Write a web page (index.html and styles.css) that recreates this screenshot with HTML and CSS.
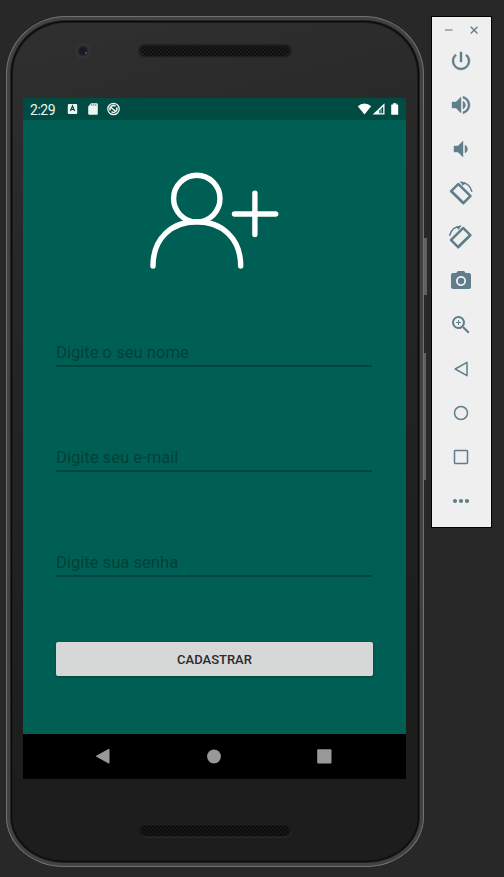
FILE: index.html
```html
<!DOCTYPE html>
<html lang="pt-BR">
<head>
<meta charset="utf-8">
<title>Cadastro</title>
<link rel="stylesheet" href="styles.css">
</head>
<body>
<main class="stage">
  <section class="phone">
    <span class="side-key power-key"></span>
    <span class="side-key volume-key"></span>
    <header class="bezel bezel-top">
      <span class="camera"></span>
      <svg class="speaker" width="154" height="14" viewBox="0 0 154 14">
        <defs><pattern id="holes" x="2" y="1" width="4" height="4" patternUnits="userSpaceOnUse"><circle cx="1" cy="1" r=".9" fill="#050505"/><circle cx="3" cy="3" r=".9" fill="#050505"/></pattern></defs>
        <rect x=".5" y=".5" width="153" height="12.500" rx="6.2" fill="#1c1c1c" stroke="#222"/>
        <rect x="3" y="2" width="148" height="10" rx="5" fill="url(#holes)"/>
      </svg>
    </header>
    <div class="screen">
      <div class="status">
        <span class="clock">2:29</span>
        <svg class="notices" width="54" height="14" viewBox="0 0 54 14">
          <rect x=".8" y="2" width="9.4" height="10" rx="1" fill="#eef5f3"/>
          <path d="M3.4 9 5.5 3.8 7.6 9M4.2 7.4h2.6" fill="none" stroke="#004c43" stroke-width="1.2"/>
          <path d="M24.2 1.2h5.6q1 0 1 1v9.600q0 1-1 1h-7.600q-1 0-1-1v-7.400z" fill="#eef5f3"/>
          <path d="M24.800 2v2M26.800 2v2M28.800 2v2" stroke="#6f9993" stroke-width="1"/>
          <circle cx="46.500" cy="7" r="5.700" fill="none" stroke="#eef5f3" stroke-width="1.300"/>
          <path d="M43.400 8.500a3.400 3.400 0 0 1 5.200-4.200M49.500 5.400a3.400 3.400 0 0 1-5 4.300M43.800 5.200l5.300 4.600" fill="none" stroke="#eef5f3" stroke-width="1.500"/>
        </svg>
        <svg class="signals" width="42" height="14" viewBox="0 0 42 14" fill="#fff">
          <path d="M.8 4.300Q3.700 1.600 7.500 1.600t6.700 2.700L7.500 12.600z"/>
          <path d="M15.700 12.600 27.500 1.200v11.400z"/><path d="M22.300 8.500 26.200 4.500v6.800h-3.900z" fill="#004c43"/><path d="M23.500 6.500h1v5h-1z" fill="#b5cbc8"/>
          <path d="M36 2.500v-1.300h3.400v1.300h1.300q.5 0 .5.500v9.200q0 .6-.6.600h-5.800q-.6 0-.6-.6v-9.200q0-.5.500-.5z"/>
        </svg>
      </div>
      <form class="signup">
        <svg class="user-plus" width="130" height="98" viewBox="0 0 130 98" fill="none" stroke="#fff" stroke-width="5.400" stroke-linecap="round">
          <ellipse cx="47.800" cy="26.600" rx="23.200" ry="23.300"/>
          <path d="M4 94C4 66 23 49.800 47.800 49.800S91.700 66 91.700 94M105.900 21.300v41.200M85.500 42h41.200"/>
        </svg>
        <label class="field">Digite o seu nome</label>
        <label class="field">Digite seu e-mail</label>
        <label class="field">Digite sua senha</label>
        <button class="submit" type="button">CADASTRAR</button>
      </form>
      <nav class="navbar">
        <svg width="16" height="16" viewBox="0 0 16 16"><path d="M14 1.200v14L1.300 8.200z" fill="#999" stroke="#999" stroke-linejoin="round"/></svg>
        <svg width="16" height="16" viewBox="0 0 16 16"><circle cx="8" cy="8.500" r="6.900" fill="#999"/></svg>
        <svg width="16" height="16" viewBox="0 0 16 16"><rect x="1.200" y="1.200" width="14.300" height="14.200" rx=".8" fill="#999"/></svg>
      </nav>
    </div>
    <footer class="bezel bezel-bottom">
      <svg class="speaker" width="154" height="14" viewBox="0 0 154 14">
        <rect x=".5" y=".5" width="153" height="12.500" rx="6.200" fill="#171717" stroke="#202020"/>
        <path d="M6 13.200h142q4.500-.5 5.300-5" fill="none" stroke="#2c2c2c"/>
        <rect x="3" y="2" width="148" height="10" rx="5" fill="url(#holes)"/>
      </svg>
    </footer>
  </section>
  <aside class="tools">
    <div class="window-keys">
      <svg width="10" height="10" viewBox="0 0 10 10"><path d="M1 5h7.500" stroke="#8fa5ae" stroke-width="1.600"/></svg>
      <svg width="10" height="10" viewBox="0 0 10 10"><path d="M1.700 1.700l6.800 6.800M8.500 1.700 1.700 8.500" stroke="#607d8b" stroke-width="1.300"/></svg>
    </div>
    <div class="tool bold"><svg viewBox="0 0 24 24"><path d="M13 3h-2v10h2V3zm4.830 2.170l-1.420 1.420A6.920 6.920 0 0 1 19 12c0 3.870-3.130 7-7 7A6.995 6.995 0 0 1 7.580 6.580L6.170 5.170A8.932 8.932 0 0 0 3 12a9 9 0 0 0 18 0c0-2.740-1.230-5.180-3.170-6.830z"/></svg></div>
    <div class="tool bold"><svg viewBox="0 0 24 24"><path d="M3 9v6h4l5 5V4L7 9H3zm13.500 3A4.500 4.500 0 0 0 14 7.970v8.050c1.480-.73 2.500-2.250 2.500-4.020zM14 3.230v2.060c2.890.86 5 3.540 5 6.710s-2.110 5.850-5 6.710v2.060c4.010-.91 7-4.490 7-8.770s-2.990-7.860-7-8.770z"/></svg></div>
    <div class="tool bold"><svg viewBox="0 0 24 24"><path d="M18.500 12A4.500 4.500 0 0 0 16 7.970v8.050c1.480-.73 2.500-2.250 2.500-4.020zM5 9v6h4l5 5V4L9 9H5z"/></svg></div>
    <div class="tool"><svg viewBox="0 0 24 24"><g id="rotate"><path fill-rule="evenodd" d="M8.300 2.300 1.300 9.300q-1 1 0 2l12 11.700q1 1 2 0l7-7q1-1 0-2L10.300 2.300q-1-1-2 0zM9.300 4.800l10.400 10.200-5.200 5.200L4 9.900z"/><path d="M11.400 1.200Q20.600 1.400 23 10.800" fill="none" stroke="#607d8b" stroke-width="1.400"/><path d="m11.600.6 5.300 1.500-3.300 2.700z"/></g></svg></div>
    <div class="tool"><svg viewBox="0 0 24 24"><use href="#rotate" transform="matrix(-1 0 0 1 23.500 0)"/></svg></div>
    <div class="tool"><svg viewBox="0 0 24 24"><circle cx="12" cy="12" r="3.200"/><path d="M9 2L7.170 4H4c-1.100 0-2 .9-2 2v12c0 1.100.9 2 2 2h16c1.100 0 2-.9 2-2V6c0-1.100-.9-2-2-2h-3.170L15 2H9zm3 15c-2.760 0-5-2.240-5-5s2.240-5 5-5 5 2.240 5 5-2.240 5-5 5z"/></svg></div>
    <div class="tool"><svg viewBox="0 0 24 24"><path d="M15.500 14h-.79l-.28-.27A6.471 6.471 0 0 0 16 9.500 6.500 6.500 0 1 0 9.500 16c1.610 0 3.090-.59 4.230-1.570l.27.280v.79l5 4.990L20.490 19l-4.990-5zm-6 0C7.010 14 5 11.990 5 9.500S7.010 5 9.500 5 14 7.010 14 9.500 11.990 14 9.500 14zM12 10h-2v2H9v-2H7V9h2V7h1v2h2v1z"/></svg></div>
    <div class="tool outline"><svg viewBox="0 0 24 24"><path d="M18 5.300v13.400L6.200 12z"/></svg></div>
    <div class="tool outline"><svg viewBox="0 0 24 24"><circle cx="12" cy="12" r="6.500"/></svg></div>
    <div class="tool outline"><svg viewBox="0 0 24 24"><rect x="5.500" y="5.500" width="13" height="13" rx=".7"/></svg></div>
    <div class="tool"><svg viewBox="0 0 24 24"><circle cx="6" cy="12" r="2.100"/><circle cx="12" cy="12" r="2.100"/><circle cx="18" cy="12" r="2.100"/></svg></div>
  </aside>
</main>
</body>
</html>
```
FILE: styles.css
```css
* { box-sizing: border-box; }
body { margin: 0; background: #282828; font-family: Roboto, sans-serif; }
svg { display: block; flex: none; }
.stage { display: flex; align-items: flex-start; gap: 7px; height: 877px; padding: 16px 0 0 6px; overflow: hidden; }
.phone {
  position: relative; flex: none; width: 418px; height: 851px; padding: 0 18px 0 17px;
  border-radius: 60px 60px 58px 58px / 58px 58px 50px 50px;
  background: linear-gradient(165deg, #303031 0%, #262626 30%, #1d1d1e 80%);
  box-shadow: inset 0 0 0 1px #727071, inset 0 0 0 4px #434142, inset 0 0 0 5px #242424, inset 0 0 0 6px #090909, inset 0 0 0 7px #1b1b1b;
}
.side-key { position: absolute; left: 418px; background: #606060; }
.power-key { top: 222px; width: 3px; height: 57px; }
.volume-key { top: 337px; width: 2px; height: 127px; }
.bezel { display: flex; justify-content: center; }
.bezel-top { height: 82px; padding-top: 28px; }
.bezel-bottom { padding-top: 45px; }
.camera {
  position: absolute; left: 69px; top: 27px; width: 16px; height: 16px; border-radius: 50%;
  background: radial-gradient(circle, #1a1820 0 3px, #2b292c 5px, #333334 6px 8px);
}
.camera::after { content: ""; position: absolute; left: 10px; top: 9px; width: 2px; height: 2px; background: #5b4250; }
.screen { width: 383px; height: 681px; }
.status { display: flex; align-items: center; height: 22px; padding: 0 7px; background: #004c43; color: #eef5f3; }
.clock { width: 37px; font-size: 14px; line-height: 22px; letter-spacing: -.45px; padding-top: 1px; }
.signals { margin-left: auto; }
.signup { display: flex; flex-direction: column; height: 614px; padding: 52px 34px 0 33px; background: #005f54; }
.user-plus { margin: 0 0 44px 93px; }
.field { height: 53px; margin-bottom: 52px; padding-top: 27px; border-bottom: 2px solid #00463e; color: #004139; font-size: 16.6px; line-height: 24px; }
.submit {
  height: 34px; margin: 13px -1px 0 0; padding: 1px 0 0; border: 0; border-radius: 2px; background: #d6d8d7;
  box-shadow: 0 1px 3px rgba(0, 0, 0, .3); color: #2a2b2b; font: 500 13px/33px Roboto, sans-serif;
}
.navbar { display: flex; justify-content: space-between; height: 45px; padding: 14px 74px 0 72px; background: #000; }
.tools { flex: none; width: 61px; height: 512px; border: 1px solid #000; background: #efefef; }
.window-keys { display: flex; justify-content: space-between; height: 22px; padding: 8px 12px 0; }
.tool { display: flex; align-items: center; justify-content: center; height: 44px; padding-right: 1px; }
.tool svg { width: 24px; height: 24px; fill: #607d8b; }
.bold svg { stroke: #607d8b; stroke-width: .4; }
.outline svg { fill: none; stroke: #607d8b; stroke-width: 1.500; stroke-linejoin: round; }
```
